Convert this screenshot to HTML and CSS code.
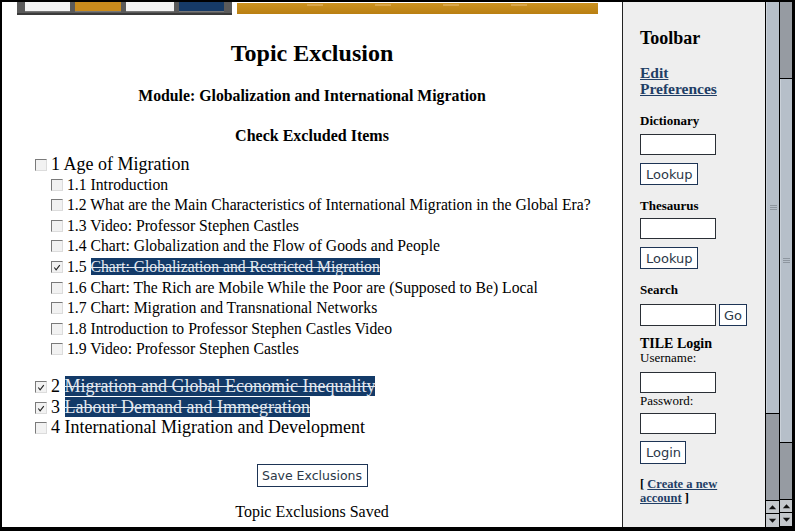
FILE: index.html
```html
<!DOCTYPE html>
<html>
<head>
<meta charset="utf-8">
<title>Topic Exclusion</title>
<link rel="stylesheet" href="styles.css">
</head>
<body>
<div class="window">
  <div class="main">
    <div class="banner">
      <div class="tabs">
        <span class="tab t-white"></span>
        <span class="tab t-gold"></span>
        <span class="tab t-white"></span>
        <span class="tab t-navy"></span>
      </div>
      <div class="goldbar">
        <span class="dash"></span><span class="dash"></span><span class="dash"></span><span class="dash"></span>
      </div>
    </div>
    <h1 class="title">Topic Exclusion</h1>
    <h2 class="module">Module: Globalization and International Migration</h2>
    <h3 class="check-head">Check Excluded Items</h3>
    <ul class="tree">
      <li class="top"><span class="cb"></span>1 Age of Migration
        <ul class="sub">
          <li><span class="cb"></span>1.1 Introduction</li>
          <li><span class="cb"></span>1.2 What are the Main Characteristics of International Migration in the Global Era?</li>
          <li><span class="cb"></span>1.3 Video: Professor Stephen Castles</li>
          <li><span class="cb"></span>1.4 Chart: Globalization and the Flow of Goods and People</li>
          <li><span class="cb on"><svg viewBox="0 0 12 12"><path d="M2.5 6 L4.5 8.5 L8.5 3.5"/></svg></span>1.5 <span class="excl">Chart: Globalization and Restricted Migration</span></li>
          <li><span class="cb"></span>1.6 Chart: The Rich are Mobile While the Poor are (Supposed to Be) Local</li>
          <li><span class="cb"></span>1.7 Chart: Migration and Transnational Networks</li>
          <li><span class="cb"></span>1.8 Introduction to Professor Stephen Castles Video</li>
          <li><span class="cb"></span>1.9 Video: Professor Stephen Castles</li>
        </ul>
      </li>
      <li class="top gap"><span class="cb on"><svg viewBox="0 0 12 12"><path d="M2.5 6 L4.5 8.5 L8.5 3.5"/></svg></span>2 <span class="excl">Migration and Global Economic Inequality</span></li>
      <li class="top"><span class="cb on"><svg viewBox="0 0 12 12"><path d="M2.5 6 L4.5 8.5 L8.5 3.5"/></svg></span>3 <span class="excl">Labour Demand and Immegration</span></li>
      <li class="top"><span class="cb"></span>4 International Migration and Development</li>
    </ul>
    <div class="actions"><button class="btn save">Save Exclusions</button></div>
    <p class="saved">Topic Exclusions Saved</p>
  </div>

  <div class="sidebar">
    <div class="tb-title">Toolbar</div>
    <a class="prefs" href="#">Edit<br>Preferences</a>
    <div class="label l-dict">Dictionary</div>
    <div class="field f-dict"></div>
    <button class="btn side-btn b-dict">Lookup</button>
    <div class="label l-thes">Thesaurus</div>
    <div class="field f-thes"></div>
    <button class="btn side-btn b-thes">Lookup</button>
    <div class="label l-search">Search</div>
    <div class="search-row">
      <div class="field"></div>
      <button class="btn side-btn go">Go</button>
    </div>
    <div class="login-head">TILE Login</div>
    <div class="small-label">Username:</div>
    <div class="field f-user"></div>
    <div class="small-label pw">Password:</div>
    <div class="field f-pass"></div>
    <button class="btn side-btn login">Login</button>
    <div class="create">
      <div class="create-line">[ <a href="#">Create a new</a></div>
      <div class="create-line"><a href="#">account</a> ]</div>
    </div>
  </div>

  <div class="scroll s1">
    <div class="thumb t1"><span class="grip"></span></div>
    <div class="track tr1"></div>
    <div class="arrow up"><svg viewBox="0 0 12 12"><path d="M2 8 L6 3.5 L10 8 Z"/></svg></div>
    <div class="arrow down"><svg viewBox="0 0 12 12"><path d="M2 4 L6 8.5 L10 4 Z"/></svg></div>
  </div>
  <div class="scroll s2">
    <div class="track tr2a"></div>
    <div class="thumb t2"><span class="grip"></span></div>
    <div class="track tr2b"></div>
    <div class="arrow up"><svg viewBox="0 0 12 12"><path d="M2 8 L6 3.5 L10 8 Z"/></svg></div>
    <div class="arrow down"><svg viewBox="0 0 12 12"><path d="M2 4 L6 8.5 L10 4 Z"/></svg></div>
  </div>
</div>
</body>
</html>
```

FILE: styles.css
```css
html, body {
  margin: 0;
  padding: 0;
  height: 100%;
}
body {
  background: #000;
  overflow: hidden;
  font-family: "Liberation Serif", "Times New Roman", serif;
  color: #000;
}
.window {
  display: flex;
  margin: 2px 0 0 2px;
  width: 793px;
  height: 525px;
  background: #000;
}

/* ---------- main ---------- */
.main {
  width: 620px;
  flex: none;
  background: #fff;
  border-right: 1px solid #222;
  overflow: hidden;
}
.banner {
  display: flex;
  align-items: flex-start;
  height: 13px;
}
.tabs {
  display: flex;
  gap: 5px;
  margin-left: 15px;
  width: 215px;
  height: 13px;
  box-sizing: border-box;
  padding: 0 4px 0 8px;
  background: #5a5a5a;
  border-bottom: 2px solid #3a3a3a;
}
.tab {
  display: block;
  width: 45px;
  height: 9px;
  border-bottom: 1px solid #777;
}
.t-white { background: #f3f3f3; }
.t-gold { background: #c88a1c; }
.t-navy { background: #163a66; }
.tabs .tab:nth-child(2) { width: 46px; }
.tabs .tab:nth-child(3) { width: 48px; }
.goldbar {
  margin: 1px 0 0 5px;
  width: 361px;
  height: 11px;
  background: linear-gradient(#cc921f, #b97f12);
  display: flex;
  padding-left: 70px;
  box-sizing: border-box;
}
.dash {
  display: block;
  width: 16px;
  height: 2px;
  margin-top: 1px;
  margin-right: 52px;
  background: #d9a64a;
}

.title {
  font-size: 24px;
  line-height: 28px;
  font-weight: bold;
  text-align: center;
  margin: 24px 0 0;
}
.module {
  font-size: 15.8px;
  line-height: 18px;
  font-weight: bold;
  text-align: center;
  margin: 20px 0 0;
}
.check-head {
  font-size: 16px;
  line-height: 18px;
  font-weight: bold;
  text-align: center;
  margin: 22px 0 0;
}
.tree {
  list-style: none;
  margin: 9px 0 0;
  padding: 0 0 0 33px;
}
.tree .top {
  font-size: 18px;
  line-height: 20.6px;
}
.tree .top.gap {
  margin-top: 16px;
}
.sub {
  list-style: none;
  margin: 0;
  padding: 0 0 0 16px;
  font-size: 15.7px;
  line-height: 20.6px;
}
.cb {
  display: inline-block;
  box-sizing: border-box;
  width: 12px;
  height: 12px;
  margin-right: 4px;
  vertical-align: -1px;
  background: #f2f2f2;
  border-top: 1px solid #7a7a7a;
  border-left: 1px solid #7a7a7a;
  border-right: 1px solid #dcdcdc;
  border-bottom: 1px solid #dcdcdc;
  position: relative;
}
.cb svg {
  position: absolute;
  left: 0;
  top: 0;
  width: 11px;
  height: 11px;
  fill: none;
  stroke: #222;
  stroke-width: 1.2;
}
.excl {
  background: #133a68;
  color: #e3e9f0;
  text-decoration: line-through;
}
.actions {
  display: flex;
  justify-content: center;
  margin-top: 26px;
}
.btn {
  font-family: "DejaVu Sans", "Lucida Grande", sans-serif;
  font-size: 13px;
  color: #2b3848;
  background: #fff;
  border: 1px solid #1d3455;
  border-radius: 0;
  padding: 0 5px;
  margin: 0;
  box-sizing: border-box;
}
.save {
  width: 111px;
  height: 23px;
  padding: 0;
  font-size: 12.5px;
}
.saved {
  font-size: 16px;
  line-height: 18px;
  text-align: center;
  margin: 16px 0 0;
}

/* ---------- sidebar ---------- */
.sidebar {
  width: 143px;
  flex: none;
  background: #eeeeee;
  box-sizing: border-box;
  padding: 25px 0 0 17px;
  border-right: 1px solid #000;
  display: flex;
  flex-direction: column;
  align-items: flex-start;
}
.tb-title {
  font-size: 18px;
  line-height: 22px;
  font-weight: bold;
}
.prefs {
  margin-top: 16px;
  font-size: 15.5px;
  line-height: 16px;
  font-weight: bold;
  color: #1f3e66;
}
.label {
  font-size: 13px;
  line-height: 15px;
  font-weight: bold;
}
.l-dict { margin-top: 15.5px; }
.l-thes { margin-top: 12.5px; }
.l-search { margin-top: 12.5px; }
.field {
  width: 76px;
  height: 21px;
  box-sizing: border-box;
  background: #fff;
  border: 1px solid #2a2f36;
}
.f-dict { margin-top: 6.5px; }
.f-thes { margin-top: 5.5px; }
.side-btn {
  height: 22px;
  margin-top: 8px;
  font-size: 13px;
  padding: 0 5px;
  width: 58px;
}
.search-row {
  display: flex;
  gap: 3px;
  margin-top: 7.5px;
}
.search-row .field { height: 22px; }
.search-row .go {
  margin: 0;
  width: 28px;
  height: 22px;
  padding: 0;
}
.login-head {
  margin-top: 12px;
  font-size: 14px;
  line-height: 12px;
  font-weight: bold;
}
.small-label {
  font-size: 13px;
  line-height: 13px;
  margin-top: 1px;
}
.small-label.pw {
  margin-top: 1px;
  line-height: 14px;
}
.f-user { margin-top: 8px; }
.f-pass { margin-top: 5px; }
.login {
  margin-top: 7px;
  height: 23px;
  width: 46px;
}
.create {
  margin-top: 12.5px;
  font-size: 12.5px;
  line-height: 14px;
  font-weight: bold;
}
.create-line {
  white-space: nowrap;
}
.create a { color: #1f3e66; }

/* ---------- scrollbars ---------- */
.scroll {
  flex: none;
  display: flex;
  flex-direction: column;
  background: #000;
  height: 525px;
}
.s1 { width: 13px; border-right: 1px solid #000; }
.s2 { width: 12px; }
.thumb {
  background: #b6bfc9;
  border-left: 1px solid #c9d0d8;
  box-sizing: border-box;
  display: flex;
  align-items: center;
  justify-content: center;
}
.track {
  background: #969ba2;
}
.t1 { height: 411px; }
.tr1 { height: 86px; margin-top: 1px; }
.tr2a { height: 76px; }
.t2 { height: 363px; margin-top: 1px; }
.tr2b { height: 56px; margin-top: 1px; }
.grip {
  display: block;
  width: 7px;
  height: 5px;
  background: repeating-linear-gradient(#8e969f 0 1px, transparent 1px 2px);
}
.arrow {
  height: 12px;
  margin-top: 1px;
  background: #c4c8cc;
  display: flex;
  align-items: center;
  justify-content: center;
}
.arrow.down { height: 13px; }
.arrow svg {
  width: 11px;
  height: 11px;
  fill: #111;
}
```
